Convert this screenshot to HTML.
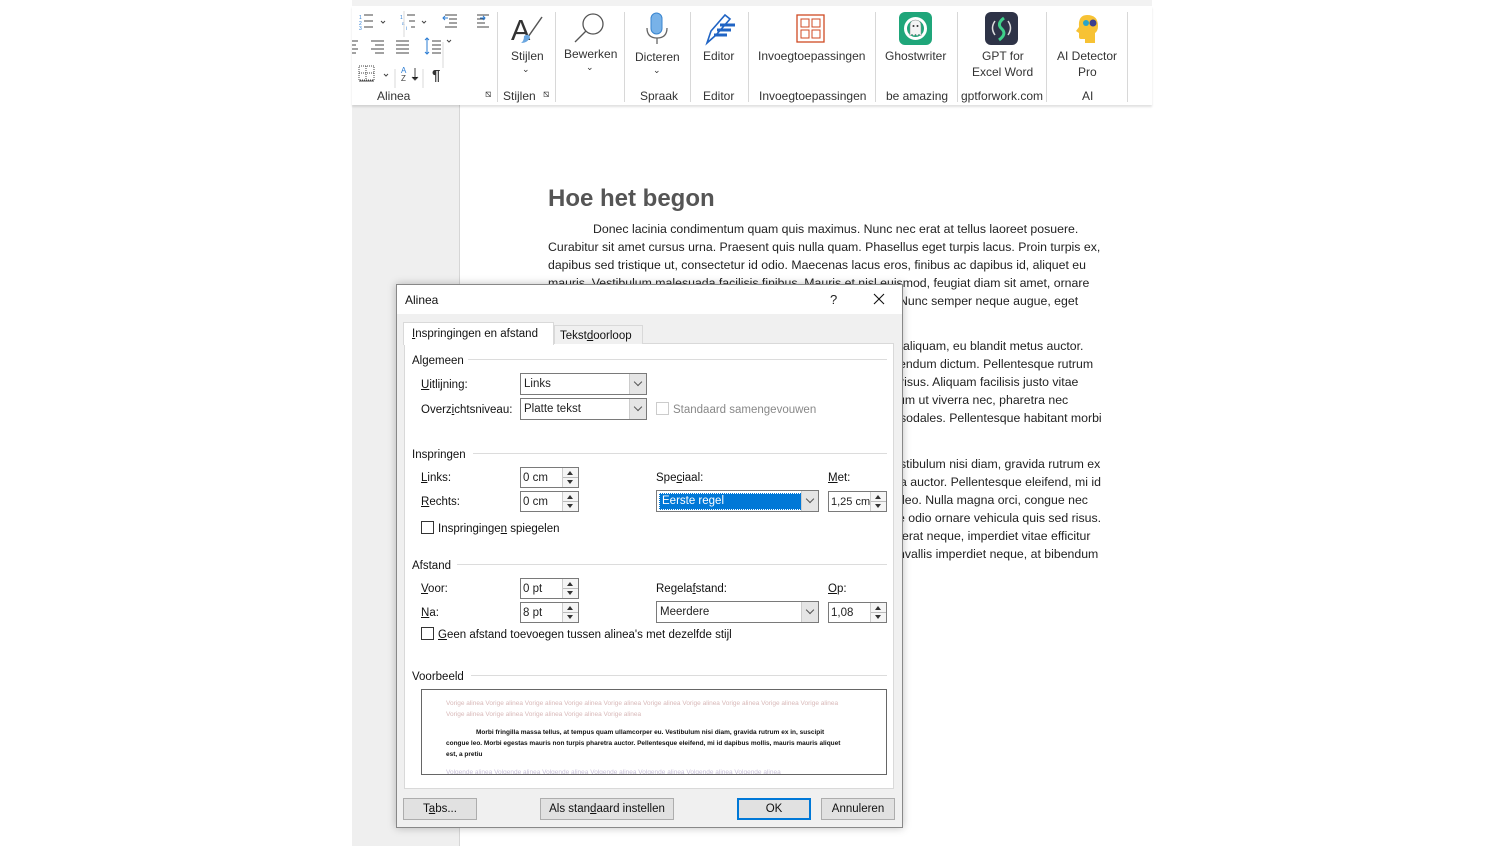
<!DOCTYPE html>
<html><head><meta charset="utf-8"><style>
*{margin:0;padding:0;box-sizing:border-box}
body{width:1504px;height:846px;position:relative;background:#fff;font-family:"Liberation Sans",sans-serif;overflow:hidden;color:#222}
.a{position:absolute;white-space:nowrap}
.rb{font-size:12px;color:#333}
.sep{position:absolute;top:12px;width:1px;height:90px;background:#d8d8d8}
.doc{font-size:12.3px;color:#222;margin-top:1px}
.dl{font-size:11.5px;color:#111;margin-top:2px}
.cb{position:absolute;background:#fff;border:1px solid #7a7a7a;height:22px;font-size:11.5px;padding:4px 0 0 3px}
.arr{position:absolute;right:0;top:0;width:17px;height:20px;background:#e5e5e5;border-left:1px solid #ccc}
.arr:after{content:"";position:absolute;left:5px;top:5px;width:5px;height:5px;border-right:1px solid #555;border-bottom:1px solid #555;transform:rotate(45deg)}
.sp{position:absolute;background:#fff;border:1px solid #7a7a7a;height:21px;font-size:11.5px;padding:4px 0 0 2px}
.sb{position:absolute;right:0;top:0;width:16px;height:19px;border-left:1px solid #ccc;background:#f5f5f5}
.sb:before{content:"";position:absolute;left:4px;top:3px;border:3px solid transparent;border-bottom:4px solid #333;border-top:0}
.sb:after{content:"";position:absolute;left:4px;top:12px;border:3px solid transparent;border-top:4px solid #333;border-bottom:0}
.sb i{position:absolute;left:0;right:0;top:9px;height:1px;background:#bbb}
.chk{position:absolute;width:13px;height:13px;border:1px solid #333;background:#fff}
.grp{position:absolute;font-size:11.5px;color:#111;margin-top:2px}
.ln{position:absolute;height:1px;background:#dcdcdc}
.btn{position:absolute;height:22px;border:1px solid #adadad;background:#e1e1e1;font-size:11.5px;text-align:center;line-height:21px;color:#111}
u{text-decoration:underline}
</style></head><body>
<div class="a" style="left:352px;top:0;width:108px;height:846px;background:#efefef;border-right:1px solid #d6d6d6"></div>
<div class="a" style="left:352px;top:0;width:800px;height:6px;background:#f2f2f2"></div>
<div class="a" style="left:352px;top:6px;width:800px;height:99px;background:#fff;box-shadow:0 2px 2px rgba(0,0,0,.12)"></div>
<svg class="a" style="left:352px;top:8px" width="145" height="80" viewBox="0 0 145 80">
<g fill="#2b7cd3" font-size="5" font-family="Liberation Sans"><text x="7" y="11">1</text><text x="7" y="17">2</text><text x="7" y="22">3</text><text x="48" y="11">1</text><text x="50" y="17">a</text><text x="54" y="22">i</text></g>
<g stroke="#444" stroke-width="1"><path d="M12 7h9M12 13h9M12 19h9M55 7h8M57 13h6M59 19h4M93 7h12M97 11h8M97 15h8M93 19h12M125 7h12M125 11h8M125 15h8M125 19h12"/>
<path d="M29 13l2 2 2-2M70 13l2 2 2-2M95 32l2 2 2-2M32 66l2 2 2-2" fill="none"/>
<path d="M0 33h6M0 37h4M0 41h6M0 45h4M19 33h13M23 37h9M19 41h13M23 45h9M44 33h13M44 37h13M44 41h13M44 45h13M80 33h9M80 37h9M80 41h9M80 45h9"/>
<path d="M7 58h15v14H7z" stroke-dasharray="1 1" fill="none"/><path d="M14 58v14M7 65h15" stroke-dasharray="1 1"/><path d="M7 73h15"/>
<path d="M63 60v12M60 69l3 3 3-3"/></g>
<path d="M75 30v16M73 32l2-2 2 2M73 44l2 2 2-2" stroke="#2b7cd3" fill="none"/>
<path d="M96 10h-5M93 8l-2 2 2 2M128 10h5M131 8l2 2-2 2" stroke="#2b7cd3" fill="none"/>
<text x="49" y="65" font-size="8" fill="#2b7cd3" font-family="Liberation Sans">A</text><text x="49" y="73" font-size="8" fill="#444" font-family="Liberation Sans">Z</text>
<text x="80" y="72" font-size="15" fill="#333" font-family="Liberation Sans" font-weight="bold">¶</text>
<path d="M52 3v26M91 34v26M43 61v20M71 61v20" stroke="#d8d8d8"/>
</svg>
<div class="a rb" style="left:377px;top:89px">Alinea</div>
<div class="a rb" style="left:485px;top:89px;font-size:10px">⧅</div>
<div class="sep" style="left:497px"></div>
<svg class="a" style="left:510px;top:13px" width="36" height="34"><text x="1" y="27" font-size="29" fill="#333" font-family="Liberation Sans">A</text><path d="M32 4L18 24" stroke="#555" stroke-width="1.5"/><path d="M14 23q4-3 6 1q-2 6-9 6q3-2 3-7z" fill="#6aa6e0"/></svg>
<div class="a rb" style="left:511px;top:49px">Stijlen</div>
<div class="a rb" style="left:522px;top:64px;font-size:9px">⌄</div>
<div class="a rb" style="left:503px;top:89px">Stijlen</div>
<div class="a rb" style="left:543px;top:89px;font-size:10px">⧅</div>
<div class="sep" style="left:555px"></div>
<svg class="a" style="left:572px;top:11px" width="34" height="34"><circle cx="21" cy="13" r="10" fill="none" stroke="#555" stroke-width="1.3"/><path d="M14 20L3 31" stroke="#555" stroke-width="1.3"/></svg>
<div class="a rb" style="left:564px;top:47px">Bewerken</div>
<div class="a rb" style="left:586px;top:62px;font-size:9px">⌄</div>
<div class="sep" style="left:624px"></div>
<svg class="a" style="left:644px;top:12px" width="26" height="34"><rect x="7" y="1" width="11" height="21" rx="5.5" fill="#78b2e8" stroke="#3a86d0"/><path d="M3 16q0 10 10 10q10 0 10-10M13 26v6" stroke="#666" fill="none" stroke-width="1.3"/></svg>
<div class="a rb" style="left:635px;top:50px">Dicteren</div>
<div class="a rb" style="left:653px;top:65px;font-size:9px">⌄</div>
<div class="a rb" style="left:640px;top:89px">Spraak</div>
<div class="sep" style="left:690px"></div>
<svg class="a" style="left:703px;top:12px" width="34" height="34"><path d="M4 31l4-12L22 3l5 4L13 23z" fill="none" stroke="#2064c4" stroke-width="1.6"/><path d="M17 13h15M14 18h14M11 23h13" stroke="#2064c4" stroke-width="3"/></svg>
<div class="a rb" style="left:703px;top:49px">Editor</div>
<div class="a rb" style="left:703px;top:89px">Editor</div>
<div class="sep" style="left:748px"></div>
<svg class="a" style="left:796px;top:14px" width="30" height="30"><rect x="1" y="1" width="27" height="27" fill="none" stroke="#d04a23" stroke-width="1.3"/><rect x="5" y="5" width="8" height="8" fill="none" stroke="#d04a23"/><rect x="16" y="5" width="8" height="8" fill="none" stroke="#d04a23"/><rect x="5" y="16" width="8" height="8" fill="none" stroke="#d04a23"/><rect x="16" y="16" width="8" height="8" fill="none" stroke="#d04a23"/></svg>
<div class="a rb" style="left:758px;top:49px">Invoegtoepassingen</div>
<div class="a rb" style="left:759px;top:89px">Invoegtoepassingen</div>
<div class="sep" style="left:875px"></div>
<svg class="a" style="left:899px;top:12px" width="34" height="34"><rect width="33" height="33" rx="6" fill="#1fa67a"/><circle cx="16.5" cy="16.5" r="10" fill="none" stroke="#fff" stroke-width="3"/><path d="M11 24v-10q0-6 5.5-6q5.5 0 5.5 6v10l-2-2-2 2-1.5-2-1.5 2-2-2z" fill="#f4f4f4" stroke="#888" stroke-width=".5"/><circle cx="14.5" cy="14" r="1" fill="#333"/><circle cx="18.5" cy="14" r="1" fill="#333"/></svg>
<div class="a rb" style="left:885px;top:49px">Ghostwriter</div>
<div class="a rb" style="left:886px;top:89px">be amazing</div>
<div class="sep" style="left:957px"></div>
<svg class="a" style="left:985px;top:12px" width="34" height="34"><rect width="33" height="33" rx="6" fill="#2e3347"/><path d="M10 9q-5 7 0 14M23 9q5 7 0 14" stroke="#ddd" fill="none" stroke-width="1.5"/><path d="M19 6q-8 6-2 11q5 5-3 11" stroke="#3fd08a" fill="none" stroke-width="3"/></svg>
<div class="a rb" style="left:982px;top:49px">GPT for</div>
<div class="a rb" style="left:972px;top:65px">Excel Word</div>
<div class="a rb" style="left:961px;top:89px">gptforwork.com</div>
<div class="sep" style="left:1046px"></div>
<svg class="a" style="left:1073px;top:13px" width="28" height="32"><path d="M14 2q11 0 11 11q0 5-3 7v10h-10v-4h-4q-2 0-2-2v-4l-3-2 3-4q-1-12 8-12z" fill="#f7c234"/><circle cx="13" cy="10" r="3" fill="#2aa5c9"/><circle cx="20" cy="10" r="3.5" fill="#3c3f8f"/></svg>
<div class="a rb" style="left:1057px;top:49px">AI Detector</div>
<div class="a rb" style="left:1078px;top:65px">Pro</div>
<div class="a rb" style="left:1082px;top:89px">AI</div>
<div class="sep" style="left:1127px"></div>

<div class="a" style="left:548px;top:185px;font-size:24px;font-weight:bold;color:#555">Hoe het begon</div>
<div class="a doc" style="left:593px;top:221px">Donec lacinia condimentum quam quis maximus. Nunc nec erat at tellus laoreet posuere.</div>
<div class="a doc" style="left:548px;top:239px">Curabitur sit amet cursus urna. Praesent quis nulla quam. Phasellus eget turpis lacus. Proin turpis ex,</div>
<div class="a doc" style="left:548px;top:257px">dapibus sed tristique ut, consectetur id odio. Maecenas lacus eros, finibus ac dapibus id, aliquet eu</div>
<div class="a doc" style="left:548px;top:275px">mauris. Vestibulum malesuada facilisis finibus. Mauris et nisl euismod, feugiat diam sit amet, ornare</div>
<div class="a doc" style="left:899px;top:293px">Nunc semper neque augue, eget</div>
<div class="a doc" style="left:903px;top:338px">aliquam, eu blandit metus auctor.</div>
<div class="a doc" style="left:899px;top:356px">endum dictum. Pellentesque rutrum</div>
<div class="a doc" style="left:900px;top:374px">risus. Aliquam facilisis justo vitae</div>
<div class="a doc" style="left:898px;top:392px">um ut viverra nec, pharetra nec</div>
<div class="a doc" style="left:900px;top:410px">sodales. Pellentesque habitant morbi</div>
<div class="a doc" style="left:900px;top:428px">.</div>
<div class="a doc" style="left:900px;top:456px">stibulum nisi diam, gravida rutrum ex</div>
<div class="a doc" style="left:900px;top:474px">a auctor. Pellentesque eleifend, mi id</div>
<div class="a doc" style="left:902px;top:492px">leo. Nulla magna orci, congue nec</div>
<div class="a doc" style="left:898px;top:510px">e odio ornare vehicula quis sed risus.</div>
<div class="a doc" style="left:902px;top:528px">erat neque, imperdiet vitae efficitur</div>
<div class="a doc" style="left:898px;top:546px">nvallis imperdiet neque, at bibendum</div>

<div class="a" style="left:396px;top:284px;width:507px;height:544px;background:#f0f0f0;border:1px solid #888;box-shadow:0 0 8px rgba(0,0,0,.25)"></div>
<div class="a" style="left:397px;top:285px;width:505px;height:29px;background:#fff"></div>
<div class="a" style="left:405px;top:293px;font-size:12px;color:#111">Alinea</div>
<div class="a" style="left:830px;top:292px;font-size:13px">?</div>
<svg class="a" style="left:873px;top:293px" width="12" height="12"><path d="M1 1l10 10M11 1L1 11" stroke="#111" stroke-width="1.1"/></svg>
<div class="a" style="left:404px;top:343px;width:490px;height:446px;background:#fff;border:1px solid #d9d9d9"></div>
<div class="a" style="left:554px;top:325px;width:89px;height:19px;background:#f0f0f0;border:1px solid #d9d9d9;border-bottom:0"></div>
<div class="a dl" style="left:560px;top:328px">Tekst<u>d</u>oorloop</div>
<div class="a" style="left:403px;top:322px;width:151px;height:23px;background:#fff;border:1px solid #d9d9d9;border-bottom:0"></div>
<div class="a dl" style="left:412px;top:326px"><u>I</u>nspringingen en afstand</div>

<div class="a grp" style="left:412px;top:353px">Algemeen</div><div class="ln" style="left:468px;top:359px;width:419px"></div>
<div class="a dl" style="left:421px;top:377px"><u>U</u>itlijning:</div>
<div class="cb" style="left:520px;top:373px;width:127px">Links<span class="arr"></span></div>
<div class="a dl" style="left:421px;top:402px">Overz<u>i</u>chtsniveau:</div>
<div class="cb" style="left:520px;top:398px;width:127px">Platte tekst<span class="arr"></span></div>
<div class="chk" style="left:656px;top:402px;border-color:#ccc"></div>
<div class="a dl" style="left:673px;top:402px;color:#888">Standaard samengevouwen</div>

<div class="a grp" style="left:412px;top:447px">Inspringen</div><div class="ln" style="left:473px;top:453px;width:414px"></div>
<div class="a dl" style="left:421px;top:470px"><u>L</u>inks:</div>
<div class="sp" style="left:520px;top:467px;width:59px">0 cm<span class="sb"><i></i></span></div>
<div class="a dl" style="left:421px;top:494px"><u>R</u>echts:</div>
<div class="sp" style="left:520px;top:491px;width:59px">0 cm<span class="sb"><i></i></span></div>
<div class="a dl" style="left:656px;top:470px">Spe<u>c</u>iaal:</div>
<div class="cb" style="left:656px;top:490px;width:163px;padding:2px"><span style="display:block;width:143px;height:17px;background:#0078d7;color:#fff;padding:2px 3px;outline:1px dotted #fff;outline-offset:-1px">Eerste regel</span><span class="arr"></span></div>
<div class="a dl" style="left:828px;top:470px"><u>M</u>et:</div>
<div class="sp" style="left:828px;top:491px;width:59px;font-size:11px">1,25 cm<span class="sb"><i></i></span></div>
<div class="chk" style="left:421px;top:521px"></div>
<div class="a dl" style="left:438px;top:521px">Inspringinge<u>n</u> spiegelen</div>

<div class="a grp" style="left:412px;top:558px">Afstand</div><div class="ln" style="left:457px;top:564px;width:430px"></div>
<div class="a dl" style="left:421px;top:581px"><u>V</u>oor:</div>
<div class="sp" style="left:520px;top:578px;width:59px">0 pt<span class="sb"><i></i></span></div>
<div class="a dl" style="left:421px;top:605px"><u>N</u>a:</div>
<div class="sp" style="left:520px;top:602px;width:59px">8 pt<span class="sb"><i></i></span></div>
<div class="a dl" style="left:656px;top:581px">Regela<u>f</u>stand:</div>
<div class="cb" style="left:656px;top:601px;width:163px">Meerdere<span class="arr"></span></div>
<div class="a dl" style="left:828px;top:581px"><u>O</u>p:</div>
<div class="sp" style="left:828px;top:602px;width:59px">1,08<span class="sb"><i></i></span></div>
<div class="chk" style="left:421px;top:627px"></div>
<div class="a dl" style="left:438px;top:627px"><u>G</u>een afstand toevoegen tussen alinea's met dezelfde stijl</div>

<div class="a grp" style="left:412px;top:669px">Voorbeeld</div><div class="ln" style="left:471px;top:675px;width:416px"></div>
<div class="a" style="left:421px;top:689px;width:466px;height:86px;background:#fff;border:1px solid #666;overflow:hidden;font-size:6.5px;line-height:11px;white-space:normal">
<div style="position:absolute;left:24px;top:8px;width:400px;color:#d8b8b8">Vorige alinea Vorige alinea Vorige alinea Vorige alinea Vorige alinea Vorige alinea Vorige alinea Vorige alinea Vorige alinea Vorige alinea Vorige alinea Vorige alinea Vorige alinea Vorige alinea Vorige alinea</div>
<div style="position:absolute;left:24px;top:37px;width:400px;color:#111;font-weight:bold;text-indent:30px">Morbi fringilla massa tellus, at tempus quam ullamcorper eu. Vestibulum nisi diam, gravida rutrum ex in, suscipit congue leo. Morbi egestas mauris non turpis pharetra auctor. Pellentesque eleifend, mi id dapibus mollis, mauris mauris aliquet est, a pretiu</div>
<div style="position:absolute;left:24px;top:77px;color:#c8c0d8;white-space:nowrap">Volgende alinea Volgende alinea Volgende alinea Volgende alinea Volgende alinea Volgende alinea Volgende alinea</div>
</div>

<div class="btn" style="left:403px;top:798px;width:74px">T<u>a</u>bs...</div>
<div class="btn" style="left:540px;top:798px;width:134px">Als stan<u>d</u>aard instellen</div>
<div class="btn" style="left:737px;top:798px;width:74px;border:2px solid #0078d7;line-height:19px">OK</div>
<div class="btn" style="left:821px;top:798px;width:74px">Annuleren</div>
</body></html>
